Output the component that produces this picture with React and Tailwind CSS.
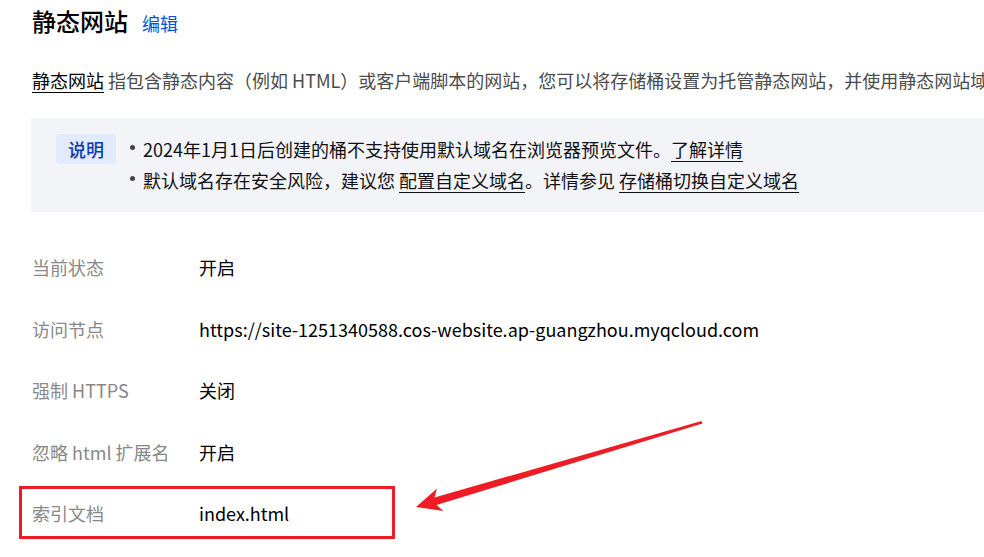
import React from 'react';

const rows = [
  { label: '当前状态', value: '开启' },
  { label: '访问节点', value: 'https://site-1251340588.cos-website.ap-guangzhou.myqcloud.com' },
  { label: '强制 HTTPS', value: '关闭' },
  { label: '忽略 html 扩展名', value: '开启' },
  { label: '索引文档', value: 'index.html' },
];

const Dot = () => (
  <span className="w-[13px] flex-shrink-0 flex items-center -mt-[5px]">
    <span className="w-[5px] h-[5px] rounded-full bg-[#444]" />
  </span>
);

const App = () => {
  return (
    <div
      className="relative w-[984px] h-[557px] overflow-hidden bg-white"
      style={{ fontFamily: '"Noto Sans CJK SC", "Noto Sans", sans-serif' }}
    >
      <div className="pl-[32px] pt-[5px]">
        {/* Header */}
        <div className="flex items-baseline gap-[14px] h-[32px]">
          <h1 className="text-[24px] leading-[32px] font-medium text-[#000]">静态网站</h1>
          <a className="text-[18px] leading-[32px] text-[#0052d9]">编辑</a>
        </div>

        {/* Description */}
        <p className="mt-[30px] text-[18px] leading-[26px] whitespace-nowrap text-[#4b4b4b]">
          <span className="underline underline-offset-4 text-[#000]">静态网站</span>
          {' '}指包含静态内容（例如 HTML）或客户端脚本的网站，您可以将存储桶设置为托管静态网站，并使用静态网站域名
        </p>

        {/* Notice */}
        <div className="mt-[25px] -ml-[1px] w-[1000px] h-[94px] bg-[#f3f4f8] flex pl-[25px] pt-[16px]">
          <span className="h-[30px] w-[60px] flex items-center justify-center rounded-[3px] bg-[#e2ebfd] text-[18px] text-[#0a3bb0] font-medium">
            说明
          </span>
          <ul className="ml-[14px] text-[18px] leading-[31px] text-[#111] whitespace-nowrap">
            <li className="flex items-center">
              <Dot />
              2024年1月1日后创建的桶不支持使用默认域名在浏览器预览文件。
              <span className="underline underline-offset-4">了解详情</span>
            </li>
            <li className="flex items-center">
              <Dot />
              默认域名存在安全风险，建议您&nbsp;
              <span className="underline underline-offset-4">配置自定义域名</span>
              。详情参见&nbsp;
              <span className="underline underline-offset-4">存储桶切换自定义域名</span>
            </li>
          </ul>
        </div>

        {/* Config rows */}
        <div className="mt-[25px]">
          {rows.map((row) => (
            <div key={row.label} className="flex items-center h-[61.5px] text-[18px]">
              <span className="w-[167px] text-[#888]">{row.label}</span>
              <span className="text-[#000]">{row.value}</span>
            </div>
          ))}
        </div>
      </div>

      {/* Annotation box */}
      <div className="absolute left-[19px] top-[486px] w-[376px] h-[53px] border-[3.5px] border-[#ee1c25]" />

      {/* Annotation arrow */}
      <svg className="absolute inset-0 w-full h-full pointer-events-none" viewBox="0 0 984 557">
        <polygon
          fill="#ee1c25"
          points="416,507 437,488.5 434.5,497.5 701.5,421 702.5,423.5 436.5,505 443.5,511"
        />
      </svg>
    </div>
  );
};

export default App;
